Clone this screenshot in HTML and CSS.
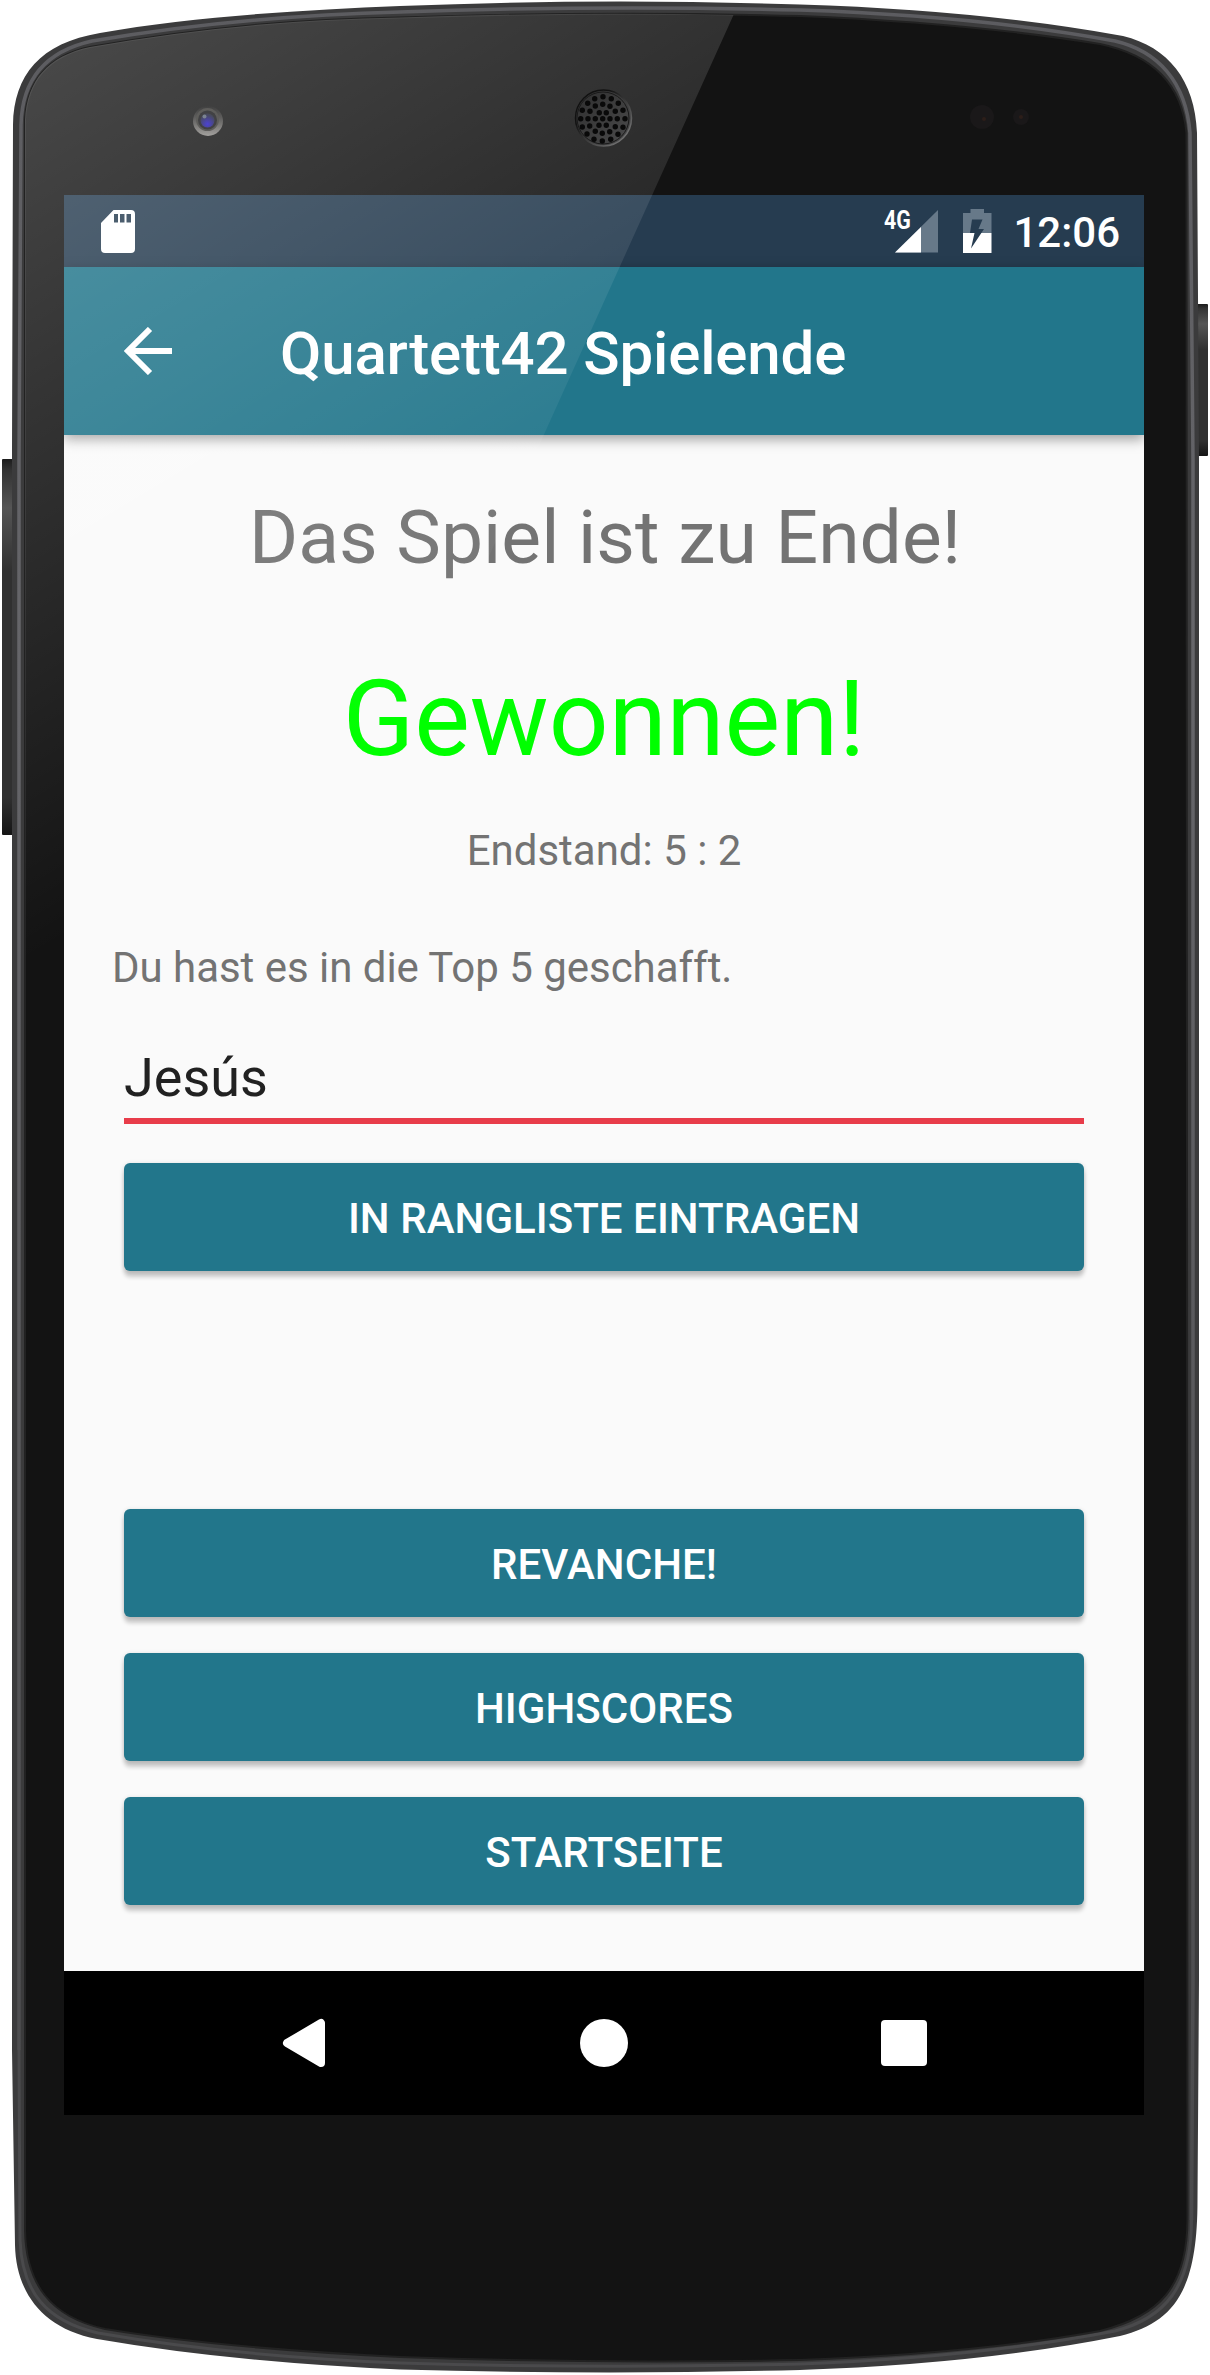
FILE: index.html
```html
<!DOCTYPE html>
<html lang="de">
<head>
<meta charset="utf-8">
<title>Quartett42 Spielende</title>
<link rel="stylesheet" href="styles.css">
</head>
<body>
<div class="device">
  <svg class="frame" width="1210" height="2375" viewBox="0 0 1210 2375" aria-hidden="true">
    <defs>
      <linearGradient id="key" x1="0" y1="0" x2="0" y2="1">
        <stop offset="0" stop-color="#1c1c1c"/><stop offset=".03" stop-color="#333"/><stop offset=".13" stop-color="#555"/>
        <stop offset=".3" stop-color="#303030"/><stop offset=".9" stop-color="#303030"/><stop offset="1" stop-color="#151515"/>
      </linearGradient>
      <linearGradient id="edge" gradientUnits="userSpaceOnUse" x1="0" y1="0" x2="0" y2="2220">
        <stop offset="0" stop-color="#5c5c60"/><stop offset=".3" stop-color="#66666a"/><stop offset="1" stop-color="#4a4a4c"/>
      </linearGradient>
      <linearGradient id="lens" x1="0" y1="0" x2="0" y2="1">
        <stop offset="0" stop-color="#141414"/><stop offset=".4" stop-color="#3c3b3a"/><stop offset="1" stop-color="#8f8c89"/>
      </linearGradient>
      <radialGradient id="glass" cx=".5" cy=".75" r=".65">
        <stop offset="0" stop-color="#2418c8"/><stop offset="1" stop-color="#1e2138"/>
      </radialGradient>
    </defs>
    <rect x="2" y="459" width="14" height="376" rx="1" fill="url(#key)"/>
    <rect x="1194" y="304" width="14" height="152" rx="1" fill="url(#key)"/>
    <path class="rim" d="M13 125C14 75 40 43 100 33C190 17 300 10 400 6Q600-2 800 4.500Q980 10 1123 36C1168 47 1195 80 1197 133L1199 460V1980L1197.500 2200C1197.500 2290 1175 2322 1120 2336Q980 2364 800 2370Q600 2375 400 2369.500Q230 2362 97 2339C40 2328 16 2290 15 2245L12 2050V450Z"/>
    <path class="rim-light" d="M19 2050V460L21 125C22 78 47 51 92 41Q240 16 400 12Q600 5 800 10Q980 16 1115 41C1158 51 1186 82 1190 133L1193 460V1980L1191.500 2220"/>
    <path class="rim-side" d="M19 2050L20 2240C22 2292 46 2321 98 2333Q230 2356 400 2363Q600 2369 800 2364Q980 2357 1115 2331C1165 2318 1191.500 2287 1191.500 2220"/>
    <path class="face" d="M25 120C27 80 48 56 90 47Q240 20 400 17.500Q600 11 800 16Q970 23 1100 44C1153 55 1182 84 1186.500 133L1187.500 2220C1187 2287 1160 2316 1100 2331Q980 2353 800 2360Q600 2364 400 2357Q220 2348 105 2329C50 2317 26 2284 25 2230Z"/>
    <circle cx="208" cy="121" r="15" fill="url(#lens)"/>
    <circle cx="207.500" cy="119.500" r="11.500" fill="#3a3936"/>
    <circle cx="207.500" cy="120" r="9.500" fill="#17171a"/>
    <circle cx="207.500" cy="120.500" r="7" fill="url(#glass)"/>
    <circle cx="204.500" cy="116.500" r="2" fill="#5d6778"/>
    <circle cx="982" cy="117" r="12" fill="#1a1819"/><circle cx="984" cy="119" r="2" fill="#2c1e19"/>
    <circle cx="1021" cy="117" r="8" fill="#1a1819"/><circle cx="1021" cy="117" r="2" fill="#2c1e19"/>
  </svg>

  <main class="screen">
    <header class="status">
      <svg width="36" height="44" viewBox="0 0 36 44" aria-hidden="true">
        <path fill="#fff" fill-rule="evenodd" d="M13.500 0H31Q35 0 35 4V39Q35 43 31 43H5Q1 43 1 39V13ZM14 4V12.500H18V4ZM20 4V12.500H24.500V4ZM26.500 4V12.500H31V4Z"/>
      </svg>
      <div class="status-right">
        <div class="signal">
          <svg width="43" height="43" viewBox="0 0 43 43" aria-hidden="true">
            <path fill="#677989" d="M43 0V42.500H0Z"/><path fill="#fff" d="M26 17V42.500H0Z"/>
          </svg>
          <span class="network">4G</span>
        </div>
        <svg class="battery" width="29" height="44" viewBox="0 0 29 44" aria-hidden="true">
          <path fill="#677989" d="M7.500 0H21V4H28.500V24H0V4H7.500Z"/><path fill="#fff" d="M0 24H28.500V44H0Z"/>
          <path fill="#263c50" d="M9 10.500H19.500L15.500 20H21L8 39.500L11.500 24H7Z"/>
        </svg>
        <span class="clock">12:06</span>
      </div>
    </header>
    <div class="toolbar">
      <svg width="48" height="48" viewBox="0 0 48 48" aria-hidden="true">
        <path fill="none" stroke="#fff" stroke-width="6" d="M48 24H5M26 2L4 24L26 46"/>
      </svg>
      <h1 class="title">Quartett42 Spielende</h1>
    </div>
    <section class="content">
      <p class="headline">Das Spiel ist zu Ende!</p>
      <p class="result">Gewonnen!</p>
      <p class="score">Endstand: 5 : 2</p>
      <p class="note">Du hast es in die Top 5 geschafft.</p>
      <div class="field">Jesús</div>
      <button class="btn">IN RANGLISTE EINTRAGEN</button>
      <div class="actions">
        <button class="btn">REVANCHE!</button>
        <button class="btn">HIGHSCORES</button>
        <button class="btn">STARTSEITE</button>
      </div>
    </section>
    <nav class="nav">
      <svg width="47" height="54" viewBox="0 0 47 54" aria-hidden="true"><path fill="#fff" stroke="#fff" stroke-width="8" stroke-linejoin="round" d="M7 27L41 7V47Z"/></svg>
      <svg width="48" height="48" viewBox="0 0 48 48" aria-hidden="true"><circle cx="24" cy="24" r="24" fill="#fff"/></svg>
      <svg width="46" height="46" viewBox="0 0 46 46" aria-hidden="true"><rect width="46" height="46" rx="4" fill="#fff"/></svg>
    </nav>
  </main>

  <svg class="glare" width="1210" height="2375" viewBox="0 0 1210 2375" aria-hidden="true">
    <defs>
      <linearGradient id="shine" gradientUnits="userSpaceOnUse" x1="0" y1="0" x2="432" y2="720">
        <stop offset="0" stop-color="#fff" stop-opacity=".245"/><stop offset="1" stop-color="#fff" stop-opacity="0"/>
      </linearGradient>
      <linearGradient id="grille" x1="0" y1="0" x2="1" y2="1">
        <stop offset="0" stop-color="#2e2e2e"/><stop offset="1" stop-color="#4b4b4c"/>
      </linearGradient>
      <linearGradient id="ring" x1="0" y1="0" x2="1" y2="1">
        <stop offset=".3" stop-color="#111"/><stop offset="1" stop-color="#888"/>
      </linearGradient>
    </defs>
    <path fill="url(#shine)" d="M25 120C27 80 48 56 90 47Q240 20 400 17.500Q570 11.500 733.500 15L302 970H25Z"/>
    <circle cx="603.500" cy="118" r="28" fill="url(#grille)" stroke="url(#ring)" stroke-width="1.500"/>
    <circle cx="603" cy="118" r="26" fill="none" stroke="#191919"/>
    <g fill="#090909">
      <circle cx="602.700" cy="118.700" r="2.700"/>
      <circle cx="599.300" cy="112.700" r="2.700"/><circle cx="606.300" cy="112.700" r="2.700"/><circle cx="610" cy="118.700" r="2.700"/><circle cx="606.300" cy="125.300" r="2.700"/><circle cx="599" cy="125.300" r="2.700"/><circle cx="595.300" cy="118.700" r="2.700"/>
      <circle cx="602.700" cy="104.300" r="2.700"/><circle cx="610" cy="106.300" r="2.700"/><circle cx="615.300" cy="111.300" r="2.700"/><circle cx="617.300" cy="118.700" r="2.700"/><circle cx="615.300" cy="126.700" r="2.700"/><circle cx="609.700" cy="131.700" r="2.700"/><circle cx="602.300" cy="133.300" r="2.700"/><circle cx="595.300" cy="131.300" r="2.700"/><circle cx="589.700" cy="126" r="2.700"/><circle cx="588" cy="118.700" r="2.700"/><circle cx="590" cy="111.300" r="2.700"/><circle cx="595.300" cy="106" r="2.700"/>
      <circle cx="603" cy="96.700" r="2.700"/><circle cx="611.300" cy="98.700" r="2.700"/><circle cx="618.300" cy="103.300" r="2.700"/><circle cx="623" cy="110.300" r="2.700"/><circle cx="625" cy="118.700" r="2.700"/><circle cx="623" cy="127.300" r="2.700"/><circle cx="618" cy="134.300" r="2.700"/><circle cx="610.700" cy="139.300" r="2.700"/><circle cx="602.300" cy="141" r="2.700"/><circle cx="594" cy="139.300" r="2.700"/><circle cx="587" cy="134" r="2.700"/><circle cx="582.300" cy="127" r="2.700"/><circle cx="580.700" cy="118.700" r="2.700"/><circle cx="582.300" cy="110.300" r="2.700"/><circle cx="587.700" cy="103.300" r="2.700"/><circle cx="594.700" cy="98.700" r="2.700"/>
    </g>
  </svg>
</div>
</body>
</html>
```
FILE: styles.css
```css
* { box-sizing: border-box; }
body { margin: 0; background: #fff; font-family: Roboto, "Liberation Sans", sans-serif; }
h1, p { margin: 0; }

.device { position: relative; width: 1210px; height: 2375px; padding: 195px 66px 260px 64px; overflow: hidden; }
.frame, .glare { position: absolute; left: 0; top: 0; display: block; }
.glare { z-index: 2; pointer-events: none; }
.rim { fill: #3b3b3c; }
.rim-light { fill: none; stroke: url(#edge); stroke-width: 3.5; }
.rim-side { fill: none; stroke: #4a4a4c; stroke-width: 3; }
.face { fill: #131313; stroke: #222; stroke-width: 2; }

.screen { position: relative; width: 1080px; height: 1920px; display: flex; flex-direction: column; background: #fafafa; overflow: hidden; }

.status { height: 72px; flex: none; display: flex; justify-content: space-between; align-items: flex-start; padding: 15px 24px 0 36px; background: #263c50; }
.status-right { display: flex; align-items: flex-start; }
.signal { position: relative; width: 43px; height: 43px; margin-right: 25px; }
.network { position: absolute; left: -11px; top: -3px; color: #fff; font-size: 26px; font-weight: 700; line-height: 26px; transform: scaleX(.82); transform-origin: left; }
.battery { margin: -1px 21px 0 0; }
.clock { color: #fff; font-size: 42px; font-weight: 500; line-height: 50px; margin-top: -2px; }

.toolbar { position: relative; z-index: 1; height: 168px; flex: none; display: flex; align-items: center; padding-left: 60px; background: #22768b; box-shadow: 0 4px 12px rgba(0, 0, 0, .38); }
.title { margin-left: 108px; padding-top: 5px; color: #fff; font-size: 60px; font-weight: 500; line-height: 70px; letter-spacing: -.15px; }

.content { flex: 1; display: flex; flex-direction: column; padding: 0 48px; color: #737373; }
.headline { margin-top: 51px; padding-left: 2px; text-align: center; font-size: 75px; line-height: 102px; letter-spacing: .03px; }
.result { margin-top: 63px; text-align: center; font-size: 105px; line-height: 138px; color: #0f0; }
.score { margin-top: 34px; text-align: center; font-size: 42px; line-height: 56px; }
.note { margin-top: 61px; font-size: 42px; line-height: 56px; letter-spacing: -.03px; }
.field { margin: 43px 12px 39px; height: 85px; border-bottom: 6px solid #e83c4a; color: #212121; font-size: 54px; line-height: 78px; }

.btn { display: block; flex: none; height: 108px; margin: 0 12px; padding: 4px 0 0; border: 0; border-radius: 6px; background: #22768b; color: #fff; font: 500 42px/104px Roboto, "Liberation Sans", sans-serif; letter-spacing: .05px; text-align: center; box-shadow: 0 6px 4px rgba(0, 0, 0, .19), 0 1px 5px rgba(0, 0, 0, .14); }
.actions { margin-top: 238px; display: flex; flex-direction: column; gap: 36px; }

.nav { height: 144px; flex: none; display: flex; align-items: center; justify-content: space-between; padding: 0 217px 0 216px; background: #000; }
```
